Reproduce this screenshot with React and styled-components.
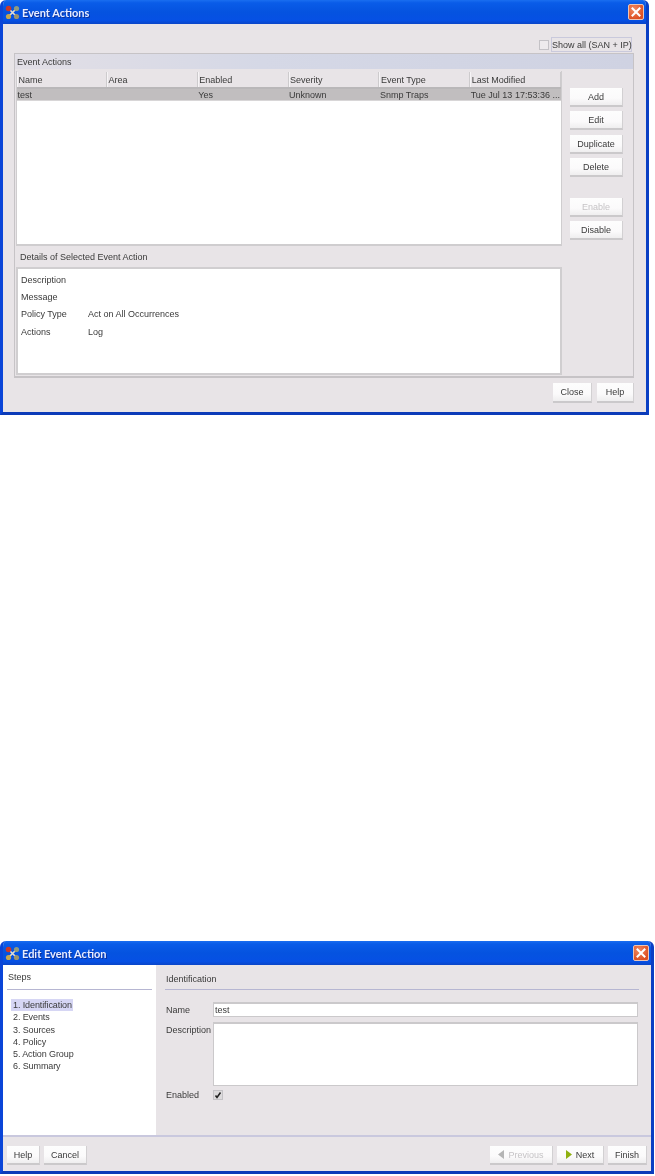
import React from 'react';
import styled, { createGlobalStyle } from 'styled-components';

const GlobalStyle = createGlobalStyle`
  html, body { margin: 0; padding: 0; background: #fff; }
  body { font-family: "Liberation Sans", Arial, sans-serif; font-size: 9px; color: #3a3a3a; }
  * { box-sizing: border-box; }
`;

const Page = styled.div`
  width: 655px;
  height: 1176px;
  background: #fff;
  filter: blur(0.55px);
  overflow: hidden;
`;

const Window = styled.div`
  display: flex;
  flex-direction: column;
  width: ${(p) => p.$width}px;
  height: ${(p) => p.$height}px;
  margin-top: ${(p) => p.$top || 0}px;
  border-radius: 6px 6px 0 0;
  border-left: 3px solid #0a45d8;
  border-right: 3px solid #0a3fc4;
  border-bottom: 3px solid #0b3bb8;
  background: #e8e4e7;
  overflow: hidden;
`;

const TitleBar = styled.div`
  display: flex;
  align-items: center;
  flex: none;
  height: 24px;
  margin: 0 -3px;
  padding: 0 5px;
  gap: 2px;
  background: linear-gradient(180deg, #1a6ef0 0%, #0a5ce8 12%, #0553e0 50%, #0650e4 85%, #0a45c8 100%);
`;

const TitleText = styled.span`
  flex: 1;
  font-family: Lato, sans-serif;
  font-weight: 700;
  font-size: 11px;
  color: #e6ecff;
  text-shadow: 1px 1px 0 #0a2f9c;
`;

const CloseBox = styled.div`
  display: flex;
  align-items: center;
  justify-content: center;
  width: 16px;
  height: 16px;
  border-radius: 2px;
  border: 1px solid #ecc4b4;
  background: radial-gradient(circle at 35% 30%, #f08a62, #dd4f22 75%);
`;

const Content = styled.div`
  flex: 1;
  display: flex;
  flex-direction: column;
  padding: 13px 12px 0 11px;
`;

const ShowAllRow = styled.div`
  display: flex;
  justify-content: flex-end;
  align-items: center;
  gap: 2px;
  height: 15px;
  padding-right: 2px;
  margin-bottom: 1px;
`;

const CheckBox = styled.span`
  display: flex;
  align-items: center;
  justify-content: center;
  width: 10px;
  height: 10px;
  background: ${(p) => (p.$checked ? '#dcdadc' : '#eeebed')};
  border: 1px solid #c4c2c6;
`;

const FocusLabel = styled.span`
  display: flex;
  align-items: center;
  height: 15px;
  width: 81px;
  border: 1px solid #c9c9dc;
  white-space: nowrap;
`;

const Panel = styled.div`
  height: 325px;
  display: flex;
  flex-direction: column;
  border: 1px solid #c6c3c6;
  border-bottom-width: 2px;
`;

const PanelTitle = styled.div`
  display: flex;
  align-items: center;
  flex: none;
  height: 15px;
  padding-left: 2px;
  background: linear-gradient(90deg, #e2dfe6 0%, #d5d8e6 40%, #cfd2e2 100%);
`;

const PanelBody = styled.div`
  flex: 1;
  display: grid;
  grid-template-columns: 547px 72px;
  padding-top: 2px;
`;

const LeftColumn = styled.div`
  display: flex;
  flex-direction: column;
`;

const TableBox = styled.div`
  margin-left: 1px;
  height: 175px;
  background: #fff;
  border-left: 1px solid #cfcdcf;
  border-bottom: 2px solid #cfcdcf;
  border-right: 1px solid #cfcdcf;
`;

const HeaderRow = styled.div`
  display: grid;
  grid-template-columns: 90px repeat(4, 90.8px) 1fr;
  height: 18px;
  padding-top: 1px;
  background: #e8e4e7;
  border-bottom: 2px solid #b9b7b9;
`;

const HeaderCell = styled.div`
  display: flex;
  align-items: center;
  padding-left: 0.5px;
  border-left: 1px solid #f6f4f6;
  border-right: 1px solid #cdcbcd;
`;

const DataRow = styled.div`
  display: grid;
  grid-template-columns: 90px repeat(4, 90.8px) 1fr;
  height: 12px;
  background: #c1bebf;
  border-bottom: 1px solid #d8d6d7;
`;

const DataCell = styled.div`
  display: flex;
  align-items: center;
  white-space: nowrap;
  overflow: hidden;
  padding-left: 0.5px;
`;

const SectionLabel = styled.div`
  height: 21px;
  display: flex;
  align-items: center;
  padding-left: 5px;
`;

const DetailsBox = styled.div`
  height: 108px;
  margin-left: 1px;
  padding: 2px 3px;
  background: #fff;
  border: 2px solid #d0ced0;
  display: grid;
  grid-template-columns: 67px 1fr;
  grid-auto-rows: 17.4px;
  align-items: center;
`;

const ActionColumn = styled.div`
  display: flex;
  flex-direction: column;
  align-items: flex-start;
  padding: 17px 0 0 8px;
`;

const Button = styled.div`
  display: flex;
  align-items: center;
  justify-content: center;
  gap: 4px;
  flex: none;
  width: ${(p) => p.$width || 53}px;
  height: ${(p) => p.$height || 19}px;
  margin-top: ${(p) => p.$top ?? 4}px;
  background: linear-gradient(180deg, #fdfdfd 0%, #fbfafb 60%, #efeeef 100%);
  border-right: 1px solid #d2d0d2;
  border-bottom: 2px solid #cbc9cb;
  color: ${(p) => (p.$disabled ? '#c6c4c6' : '#3a3a3a')};
  white-space: nowrap;
`;

const BottomBar = styled.div`
  display: flex;
  justify-content: flex-end;
  gap: 5px;
  padding: 5px 0 0;
`;

const WizardBody = styled.div`
  flex: none;
  height: 172px;
  display: grid;
  grid-template-columns: 153px 1fr;
  border-bottom: 2px solid #c9c8de;
`;

const StepsPane = styled.div`
  background: #fff;
  padding: 0 4px;
`;

const PaneHeading = styled.div`
  display: flex;
  align-items: center;
  height: 25px;
  padding-top: ${(p) => p.$shift || 0}px;
  padding-left: 1px;
  border-bottom: 1px solid #b6b6d2;
`;

const StepList = styled.div`
  display: flex;
  flex-direction: column;
  align-items: flex-start;
  padding: 9px 0 0 4px;
`;

const Step = styled.div`
  height: 12.25px;
  line-height: 12.25px;
  padding: 0 1px 0 2px;
  letter-spacing: -0.1px;
  background: ${(p) => (p.$active ? '#d6d6f4' : 'transparent')};
  white-space: nowrap;
`;

const FormPane = styled.div`
  padding: 0 12px 0 9px;
`;

const FormGrid = styled.div`
  display: grid;
  grid-template-columns: 48px 1fr;
  row-gap: 5px;
  padding-top: 12px;
`;

const FieldLabel = styled.div`
  padding: ${(p) => p.$pad || 0}px 0 0 1px;
`;

const EnabledLabel = styled(FieldLabel)`
  margin-top: -1px;
`;

const TextField = styled.div`
  height: ${(p) => p.$height}px;
  padding: 1px;
  background: #fff;
  border: 1px solid #cbc9cb;
  border-top-width: 2px;
  margin-right: 1px;
`;

const EnabledBox = styled(CheckBox)`
  margin-top: -1px;
`;

const WizardFooter = styled.div`
  flex: 1;
  display: flex;
  justify-content: space-between;
  padding: 9px 4px 0 4px;
`;

const ButtonGroup = styled.div`
  display: flex;
  gap: 4px;
`;

const AppIcon = () => (
  <svg width="15" height="15" viewBox="0 0 15 15">
    <path d="M4 4 L11 11 M11 4 L4 11" stroke="#e4e0d4" strokeWidth="1.6" />
    <circle cx="3.5" cy="3.5" r="2.8" fill="#c9382a" />
    <circle cx="11.5" cy="3.5" r="2.6" fill="#8f9a80" />
    <circle cx="3.5" cy="11.5" r="2.6" fill="#c4a650" />
    <circle cx="11.5" cy="11.5" r="2.6" fill="#9a9470" />
  </svg>
);

const CloseIcon = () => (
  <svg width="10" height="10" viewBox="0 0 10 10">
    <path d="M1.5 1.5 L8.5 8.5 M8.5 1.5 L1.5 8.5" stroke="#fff" strokeWidth="2" strokeLinecap="square" />
  </svg>
);

const Arrow = ({ left, color }) => (
  <svg width="6" height="9" viewBox="0 0 6 9">
    <path d={left ? 'M6 0 L0 4.5 L6 9 Z' : 'M0 0 L6 4.5 L0 9 Z'} fill={color} />
  </svg>
);

const columns = ['Name', 'Area', 'Enabled', 'Severity', 'Event Type', 'Last Modified'];
const row = ['test', '', 'Yes', 'Unknown', 'Snmp Traps', 'Tue Jul 13 17:53:36 ...'];
const details = [
  ['Description', ''],
  ['Message', ''],
  ['Policy Type', 'Act on All Occurrences'],
  ['Actions', 'Log'],
];
const steps = ['1. Identification', '2. Events', '3. Sources', '4. Policy', '5. Action Group', '6. Summary'];

export default function App() {
  return (
    <Page>
      <GlobalStyle />
      <Window $width={649} $height={415}>
        <TitleBar>
          <AppIcon />
          <TitleText>Event Actions</TitleText>
          <CloseBox><CloseIcon /></CloseBox>
        </TitleBar>
        <Content>
          <ShowAllRow>
            <CheckBox />
            <FocusLabel>Show all (SAN + IP)</FocusLabel>
          </ShowAllRow>
          <Panel>
            <PanelTitle>Event Actions</PanelTitle>
            <PanelBody>
              <LeftColumn>
                <TableBox>
                  <HeaderRow>
                    {columns.map((c) => <HeaderCell key={c}>{c}</HeaderCell>)}
                  </HeaderRow>
                  <DataRow>
                    {row.map((c, i) => <DataCell key={i}>{c}</DataCell>)}
                  </DataRow>
                </TableBox>
                <SectionLabel>Details of Selected Event Action</SectionLabel>
                <DetailsBox>
                  {details.map(([k, v]) => (
                    <React.Fragment key={k}>
                      <span>{k}</span>
                      <span>{v}</span>
                    </React.Fragment>
                  ))}
                </DetailsBox>
              </LeftColumn>
              <ActionColumn>
                <Button $top={0}>Add</Button>
                <Button>Edit</Button>
                <Button $top={5}>Duplicate</Button>
                <Button $top={4}>Delete</Button>
                <Button $top={21} $disabled>Enable</Button>
                <Button>Disable</Button>
              </ActionColumn>
            </PanelBody>
          </Panel>
          <BottomBar>
            <Button $width={39} $height={20} $top={0}>Close</Button>
            <Button $width={37} $height={20} $top={0}>Help</Button>
          </BottomBar>
        </Content>
      </Window>

      <Window $width={654} $height={233} $top={526}>
        <TitleBar>
          <AppIcon />
          <TitleText>Edit Event Action</TitleText>
          <CloseBox><CloseIcon /></CloseBox>
        </TitleBar>
        <WizardBody>
          <StepsPane>
            <PaneHeading>Steps</PaneHeading>
            <StepList>
              {steps.map((s, i) => <Step key={s} $active={i === 0}>{s}</Step>)}
            </StepList>
          </StepsPane>
          <FormPane>
            <PaneHeading $shift={4}>Identification</PaneHeading>
            <FormGrid>
              <FieldLabel $pad={3}>Name</FieldLabel>
              <TextField $height={15}>test</TextField>
              <FieldLabel $pad={3}>Description</FieldLabel>
              <TextField $height={64} />
              <EnabledLabel>Enabled</EnabledLabel>
              <EnabledBox $checked>
                <svg width="8" height="8" viewBox="0 0 8 8">
                  <path d="M1.5 4.5 L3 6.5 L6.5 1.5" stroke="#222" strokeWidth="1.6" fill="none" />
                </svg>
              </EnabledBox>
            </FormGrid>
          </FormPane>
        </WizardBody>
        <WizardFooter>
          <ButtonGroup>
            <Button $width={33} $top={0}>Help</Button>
            <Button $width={43} $top={0}>Cancel</Button>
          </ButtonGroup>
          <ButtonGroup>
            <Button $width={63} $top={0} $disabled><Arrow left color="#b5b5b5" />Previous</Button>
            <Button $width={47} $top={0}><Arrow color="#8fb010" />Next</Button>
            <Button $width={39} $top={0}>Finish</Button>
          </ButtonGroup>
        </WizardFooter>
      </Window>
    </Page>
  );
}
